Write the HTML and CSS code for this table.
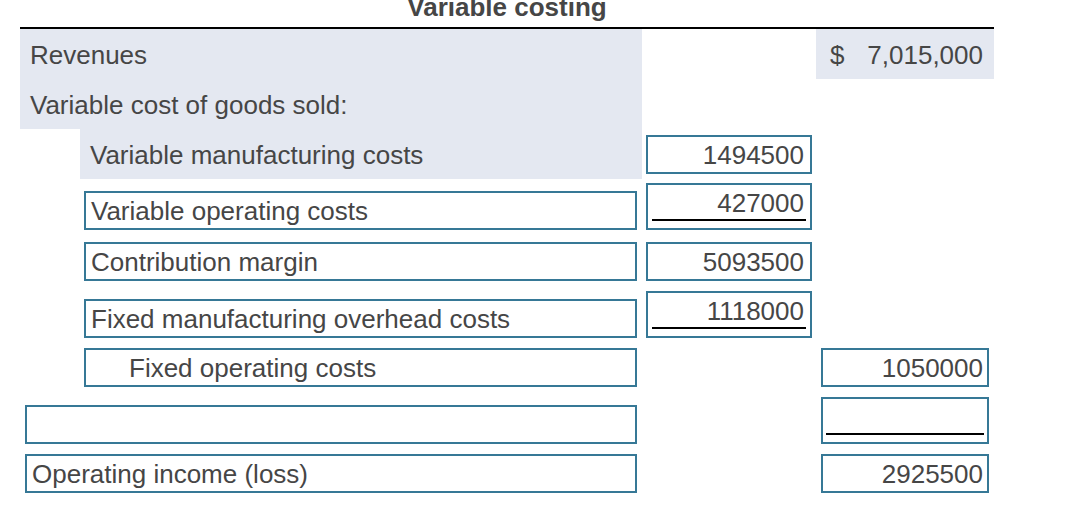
FILE: index.html
```html
<!DOCTYPE html>
<html lang="en">
<head>
<meta charset="utf-8">
<title>Variable costing</title>
<link rel="stylesheet" href="styles.css">
</head>
<body>
<div class="sheet">
  <div class="title">Variable costing</div>

  <div class="row text-row">
    <div class="shade label-text">Revenues</div>
    <div></div>
    <div class="shade amount"><span>$</span><span>7,015,000</span></div>
  </div>

  <div class="row text-row">
    <div class="shade label-text">Variable cost of goods sold:</div>
    <div></div>
    <div></div>
  </div>

  <div class="row text-row">
    <div class="indent-wrap"><div class="shade label-text">Variable manufacturing costs</div></div>
    <div class="col2"><div class="box num top-gap">1494500</div></div>
    <div></div>
  </div>

  <div class="row gap-sm">
    <div class="lbl indent"><div class="box">Variable operating costs</div></div>
    <div class="col2"><div class="box tall"><div class="sum">427000</div></div></div>
    <div></div>
  </div>

  <div class="row gap-lg">
    <div class="lbl indent"><div class="box">Contribution margin</div></div>
    <div class="col2"><div class="box num">5093500</div></div>
    <div></div>
  </div>

  <div class="row">
    <div class="lbl indent"><div class="box">Fixed manufacturing overhead costs</div></div>
    <div class="col2"><div class="box tall"><div class="sum">1118000</div></div></div>
    <div></div>
  </div>

  <div class="row">
    <div class="lbl indent"><div class="box sub">Fixed operating costs</div></div>
    <div></div>
    <div class="col3"><div class="box num">1050000</div></div>
  </div>

  <div class="row">
    <div class="lbl"><div class="box"></div></div>
    <div></div>
    <div class="col3"><div class="box tall"><div class="sum"></div></div></div>
  </div>

  <div class="row">
    <div class="lbl"><div class="box">Operating income (loss)</div></div>
    <div></div>
    <div class="col3"><div class="box num">2925500</div></div>
  </div>
</div>
</body>
</html>
```

FILE: styles.css
```css
* {
  box-sizing: border-box;
}

body {
  margin: 0;
  background: #ffffff;
  color: #464646;
  font-family: "Liberation Sans", Arial, Helvetica, sans-serif;
  font-size: 26px;
}

.sheet {
  width: 974px;
  margin-left: 20px;
}

.title {
  margin-top: -8px;
  padding-bottom: 5px;
  border-bottom: 2px solid #000000;
  text-align: center;
  font-weight: bold;
  font-size: 26px;
  line-height: 30px;
}

.row {
  display: grid;
  grid-template-columns: 622px 174px 178px;
  align-items: end;
  line-height: 30px;
  margin-top: 10px;
}

.row.text-row {
  height: 50px;
  align-items: stretch;
  margin-top: 0;
}

.row.gap-sm {
  margin-top: 4px;
}

.row.gap-lg {
  margin-top: 12px;
}

.shade {
  background: #e4e8f1;
}

.label-text {
  padding: 11px 10px 0;
  white-space: nowrap;
}

.indent-wrap {
  padding-left: 60px;
  display: flex;
}

.indent-wrap .shade {
  flex: 1;
}

.amount {
  display: flex;
  justify-content: space-between;
  padding: 11px 11px 0 14px;
}

.lbl {
  padding: 0 5px;
}

.lbl.indent {
  padding-left: 64px;
}

.col2 {
  padding: 0 4px;
}

.col3 {
  padding: 0 5px;
}

.box {
  height: 39px;
  border: 2px solid #367896;
  padding: 3px 6px 0 5px;
  white-space: nowrap;
  background: #ffffff;
}

.box.sub {
  padding-left: 43px;
}

.box.num {
  text-align: right;
}

.col3 .box.num {
  padding-right: 4px;
}

.top-gap {
  margin-top: 6px;
}

.box.tall {
  height: 47px;
  padding: 0;
}

.sum {
  height: 36px;
  margin: 0 4px;
  padding: 3px 2px 1px 0;
  border-bottom: 2px solid #000000;
  text-align: right;
}

.col3 .sum {
  margin: 0 3px;
  padding-right: 1px;
}
```
